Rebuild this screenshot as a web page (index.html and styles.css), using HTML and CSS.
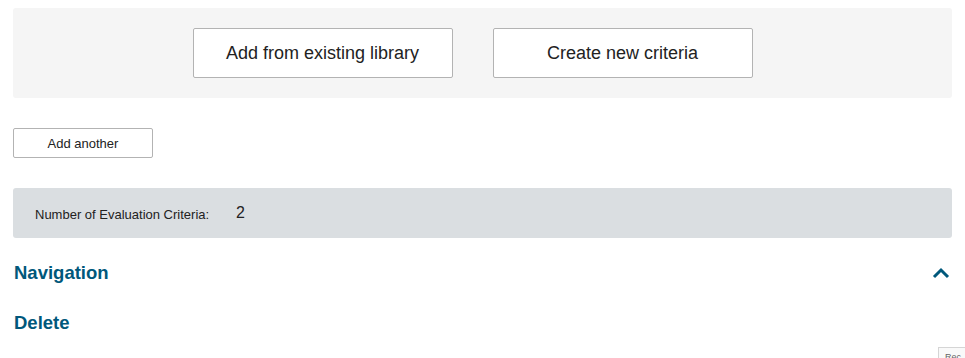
FILE: index.html
```html
<!DOCTYPE html>
<html lang="en">
  <head>
    <meta charset="UTF-8" />
    <meta name="viewport" content="width=device-width, initial-scale=1.0" />
    <title>Evaluation Criteria</title>
    <link rel="stylesheet" href="styles.css">
  </head>
  <body>
    <div class="page">
      <div class="choice-panel">
        <button type="button" class="big-btn">Add from existing library</button>
        <button type="button" class="big-btn">Create new criteria</button>
      </div>

      <button type="button" class="small-btn">Add another</button>

      <div class="count-bar">
        <span class="count-label">Number of Evaluation Criteria:</span>
        <span class="count-value">2</span>
      </div>

      <div class="section-head">
        <h2 class="section-title">Navigation</h2>
        <svg class="chevron" width="18" height="12" viewBox="0 0 18 12">
          <path d="M2 10 L9 3 L16 10" fill="none" stroke="#00587b" stroke-width="3" />
        </svg>
      </div>

      <h2 class="section-title delete-title">Delete</h2>
    </div>

    <div class="badge">Rec</div>
  </body>
</html>
```

FILE: styles.css
```css
* {
  margin: 0;
  padding: 0;
  box-sizing: border-box;
}

body {
  font-family: "Liberation Sans", Arial, sans-serif;
  background-color: #ffffff;
  color: #222222;
  overflow: hidden;
}

.page {
  padding: 8px 13px 0 13px;
}

.choice-panel {
  background-color: #f5f5f5;
  border-radius: 3px;
  height: 90px;
  display: flex;
  justify-content: center;
  align-items: center;
  gap: 40px;
  padding-right: 20px;
}

.big-btn {
  width: 260px;
  height: 50px;
  background-color: #ffffff;
  border: 1px solid #b3b3b3;
  border-radius: 2px;
  font-family: inherit;
  font-size: 18px;
  color: #222222;
  cursor: pointer;
}

.small-btn {
  display: block;
  margin-top: 30px;
  width: 140px;
  height: 30px;
  background-color: #ffffff;
  border: 1px solid #b3b3b3;
  border-radius: 2px;
  font-family: inherit;
  font-size: 13px;
  color: #222222;
  cursor: pointer;
}

.count-bar {
  margin-top: 30px;
  height: 50px;
  background-color: #dadee1;
  border-radius: 3px;
  display: flex;
  align-items: center;
  padding-left: 22px;
}

.count-label {
  font-size: 13px;
  width: 201px;
  padding-top: 2px;
}

.count-value {
  font-size: 16px;
}

.section-head {
  display: flex;
  justify-content: space-between;
  align-items: center;
  margin-top: 24px;
  padding-right: 1px;
}

.section-title {
  font-size: 18.5px;
  font-weight: bold;
  color: #00587b;
  padding-left: 1px;
  line-height: 22px;
}

.chevron {
  margin-right: 1px;
}

.delete-title {
  margin-top: 28px;
}

.badge {
  position: absolute;
  left: 938px;
  top: 347px;
  width: 60px;
  height: 40px;
  border: 1px solid #d5d5d5;
  background-color: #f9f9f9;
  font-size: 9px;
  line-height: 9px;
  color: #666666;
  padding: 5px 6px;
}
```
